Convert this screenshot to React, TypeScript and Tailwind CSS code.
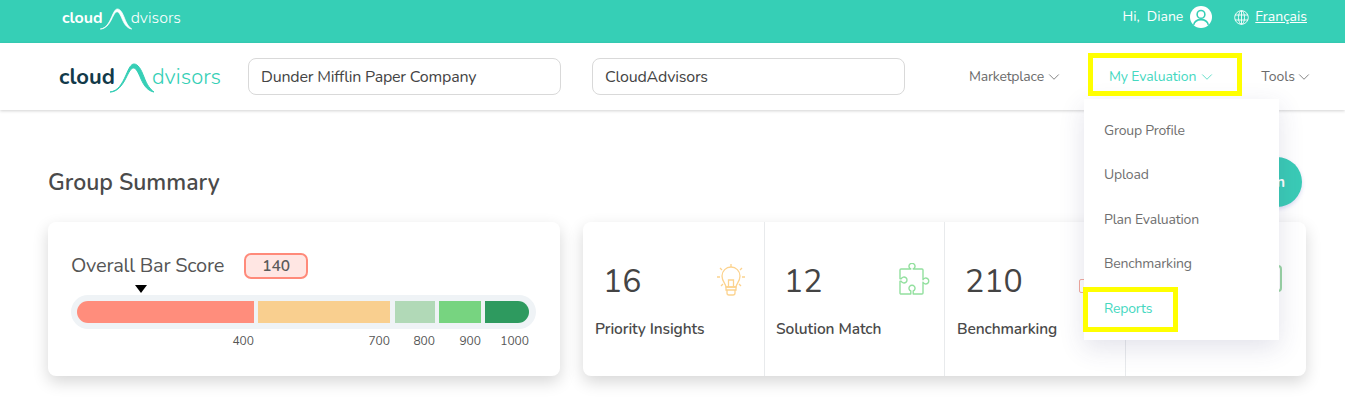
import React from "react";
import { ChevronDown } from "lucide-react";

const font = { fontFamily: '"Nunito","Lato","Open Sans",sans-serif' };

const swoosh = "M0 28 C8 27 12 20 16 11 C19 4 21 0 24 0 C28 0 31 5 34 13 C37 21 40 25 44 28 C38 27 34 22 31 15 C28 8 26 4 23.500 4 C21 4 19 8 16 14 C12 22 7 28 0 28Z";

function Logo({ small }: { small?: boolean }) {
  if (small) {
    return (
      <div className="mt-[3px] flex items-end text-white text-[16px] leading-[20px]">
        <span className="font-bold">cloud</span>
        <svg width="32" height="20" viewBox="0 0 44 28" className="-ml-[3px] -mr-[1px] mb-[-1px] overflow-visible">
          <path d={swoosh} fill="white" stroke="white" strokeWidth="1" />
        </svg>
        <span className="font-light">dvisors</span>
      </div>
    );
  }
  return (
    <div className="flex items-end text-[22px] leading-[26px]">
      <span className="font-bold text-[#123a4a]">cloud</span>
      <svg width="44" height="28" viewBox="0 0 44 28" className="-ml-[5px] -mr-[2px] mb-[-2px] overflow-visible">
        <path d={swoosh} fill="#36cfb6" stroke="#36cfb6" strokeWidth="1" />
      </svg>
      <span className="font-light text-[#36cfb6]">dvisors</span>
    </div>
  );
}

function Bulb() {
  return (
    <svg width="30" height="34" viewBox="0 0 30 34" fill="none" stroke="#fcd38f" strokeWidth="1.3" className="-mt-[4px]">
      <path d="M15 1v3M4 5l2 2M26 5l-2 2M1 14h3M26 14h3M5 23l2-2M25 23l-2-2" />
      <path d="M10 24c0-3-4-5-4-11a9 9 0 0 1 18 0c0 6-4 8-4 11z" />
      <path d="M12.500 24v-7h5v7M10 24h10v3h-10zM11 27h8v3a2 2 0 0 1-2 2h-4a2 2 0 0 1-2-2z" />
    </svg>
  );
}

function Puzzle() {
  return (
    <svg width="32" height="32" viewBox="0 0 32 32" fill="none" stroke="#93e09f" strokeWidth="1.4" strokeLinejoin="round" className="-mr-[4px] -mt-[5px]">
      <path d="M3 6 H12.800 A3 3 0 1 1 15.200 6 H24 a1 1 0 0 1 1 1 V16.800 A3 3 0 1 1 25 19.200 V30 a1 1 0 0 1 -1 1 H15.200 V28 A3 3 0 1 0 12.800 28 V31 H3 a1 1 0 0 1 -1 -1 V18.200 H3.250 A3 3 0 1 0 3.250 15.800 H2 V7 a1 1 0 0 1 1 -1 Z" />
    </svg>
  );
}

function Stat({ value, label, icon, className, innerClass }: { value: string; label: string; icon?: React.ReactNode; className?: string; innerClass?: string }) {
  return (
    <div className={`relative flex flex-col border-r border-[#e8eaec] ${className ?? ""}`}>
      <div className={`flex items-center justify-between pt-[40px] pl-[20px] pr-[18px] h-[79px] ${innerClass ?? ""}`}>
        <span className="text-[32px] leading-[42px] text-[#444444]">{value}</span>
        {icon}
      </div>
      <div className={`pl-[12px] mt-[17px] text-[15.500px] leading-[22px] tracking-[-0.1px] font-semibold text-[#4a4a4a] ${innerClass ?? ""}`}>{label}</div>
    </div>
  );
}

function Seg({ color, className, label }: { color: string; className: string; label: string }) {
  return (
    <div className={className}>
      <div className={`h-[22px] ${color}`} />
      <div className="mt-[10px] text-right text-[12px] leading-[16px] text-[#555555]">{label}</div>
    </div>
  );
}

const items = ["Group Profile", "Upload", "Plan Evaluation", "Benchmarking"];

export default function App() {
  return (
    <div style={font} className="relative h-[409px] w-[1345px] overflow-hidden bg-white text-[#555555]">
      <header className="flex h-[43px] items-center justify-between bg-[#36cfb6] pb-[10px] pl-[62px] pr-[38px]">
        <Logo small />
        <div className="flex items-center text-white text-[14px]">
          <span>Hi,&nbsp; Diane</span>
          <svg width="22" height="22" viewBox="0 0 21 21" className="ml-[7px]">
            <circle cx="10.500" cy="10.500" r="10.500" fill="white" />
            <circle cx="10.500" cy="8" r="3.700" fill="none" stroke="#36cfb6" strokeWidth="1.5" />
            <path d="M3.500 18c1-4 4-5 7-5s6 1 7 5" fill="none" stroke="#36cfb6" strokeWidth="1.500" />
          </svg>
          <svg width="15" height="15" viewBox="0 0 15 15" fill="none" stroke="white" strokeWidth="0.9" className="ml-[22px] mt-[2px]">
            <circle cx="7.500" cy="7.500" r="6.800" />
            <ellipse cx="7.500" cy="7.500" rx="3" ry="6.800" />
            <path d="M1 5h13M1 10h13M7.500 1v13" />
          </svg>
          <span className="ml-[6px] underline">Français</span>
        </div>
      </header>

      <nav className="relative z-10 flex h-[67px] items-center bg-white pl-[59px] shadow-[0_1px_3px_rgba(0,0,0,0.18)]">
        <div className="w-[189px]"><Logo /></div>
        <div className="flex h-[37px] w-[313px] items-center rounded-[8px] border border-[#d9d9d9] pl-[12px] text-[16px] tracking-[-0.2px] text-[#444444]">Dunder Mifflin Paper Company</div>
        <div className="ml-[31px] flex h-[37px] w-[313px] items-center rounded-[8px] border border-[#d9d9d9] pl-[12px] text-[16px] tracking-[-0.2px] text-[#444444]">CloudAdvisors</div>
        <div className="ml-[64px] flex items-center text-[14px] tracking-[-0.2px] text-[#6b6b6b]">
          Marketplace <ChevronDown size={18} strokeWidth={1.1} className="ml-[1px]" />
        </div>
        <div className="ml-[46px] flex items-center text-[14px] tracking-[-0.1px] text-[#45d8bf]">
          My Evaluation <ChevronDown size={18} strokeWidth={1.1} className="ml-[2px]" />
        </div>
        <div className="ml-[45px] flex items-center text-[14px] text-[#6b6b6b]">
          Tools <ChevronDown size={18} strokeWidth={1.1} />
        </div>
      </nav>

      <main className="pl-[48px] pr-[39px]">
        <div className="flex h-[112px] items-center justify-between pt-[49px] pb-[17px]">
          <h1 className="mt-[2px] text-[23px] font-semibold leading-[32px] text-[#4a4a4a]">Group Summary</h1>
          <div className="mr-[4px] flex h-[50px] w-[120px] shrink-0 items-center justify-end rounded-full bg-[#3acbb6] pr-[17px] text-[15px] font-bold text-white shadow-[0_2px_4px_rgba(80,80,200,0.2)]">Plan</div>
        </div>
        <div className="flex gap-[23px]">
          <section className="h-[154px] w-[512px] rounded-[8px] bg-white pl-[23px] pr-[24px] pt-[31px] shadow-[0_6px_16px_rgba(0,0,0,0.16)]">
            <div className="flex items-center">
              <span className="text-[20px] leading-[26px] tracking-[-0.25px] text-[#555555]">Overall Bar Score</span>
              <span className="ml-[20px] flex h-[26px] w-[64px] items-center justify-center rounded-[7px] border-[2.500px] border-[#ff8a7a] bg-[#ffe6e3] text-[15.500px] font-semibold text-[#5a5a5a]">140</span>
            </div>
            <div className="relative mt-[16px] h-[34px] rounded-full bg-[#eff3f6] p-[6px]">
              <div className="absolute left-[64px] top-[-10px] h-0 w-0 border-x-[6px] border-t-[8px] border-x-transparent border-t-black" />
              <div className="flex gap-[4px]">
                <Seg color="rounded-l-full bg-[#ff8d7c]" className="w-[177px]" label="400" />
                <Seg color="bg-[#f9cf8f]" className="w-[132px]" label="700" />
                <Seg color="bg-[#b1d9b7]" className="ml-[1px] w-[40px]" label="800" />
                <Seg color="bg-[#77d480]" className="w-[42px]" label="900" />
                <Seg color="rounded-r-full bg-[#2e9a5f]" className="w-[44px]" label="1000" />
              </div>
            </div>
          </section>

          <section className="flex h-[154px] w-[723px] overflow-hidden rounded-[8px] bg-white shadow-[0_6px_16px_rgba(0,0,0,0.16)]">
            <Stat className="w-[182px]" value="16" label="Priority Insights" icon={<Bulb />} />
            <Stat className="w-[180px]" innerClass="-ml-[1px]" value="12" label="Solution Match" icon={<Puzzle />} />
            <Stat
              className="w-[181px]"
              value="210"
              label="Benchmarking"
              icon={<span className="mt-[8px] h-[14px] w-[28px] rounded-[2px] border border-[#f3a99e]" />}
            />
            <div className="flex flex-1 items-start justify-end pr-[24px] pt-[43px]">
              <span className="h-[27px] w-[28px] rounded-[4px] border-[2px] border-[#9bd6a5]" />
            </div>
          </section>
        </div>
      </main>

      {/* Dropdown menu over the page */}
      <div className="absolute left-[1084px] top-[99px] z-20 flex h-[241px] w-[195px] flex-col pt-[9px] bg-white pl-[20px] text-[14px] tracking-[-0.2px] text-[#6f6f6f] shadow-[0_8px_24px_rgba(60,60,110,0.14)]">
        {items.map((t) => (
          <div key={t} className="flex h-[44.500px] items-center">{t}</div>
        ))}
        <div className="flex h-[44.500px] items-center text-[#45d8bf]">Reports</div>
      </div>

      {/* Yellow annotation boxes */}
      <div className="absolute left-[1088px] top-[53px] z-30 h-[43px] w-[154px] border-[5px] border-[#ffff00]" />
      <div className="absolute left-[1083px] top-[287px] z-30 h-[45px] w-[95px] border-[5px] border-[#ffff00]" />
    </div>
  );
}
